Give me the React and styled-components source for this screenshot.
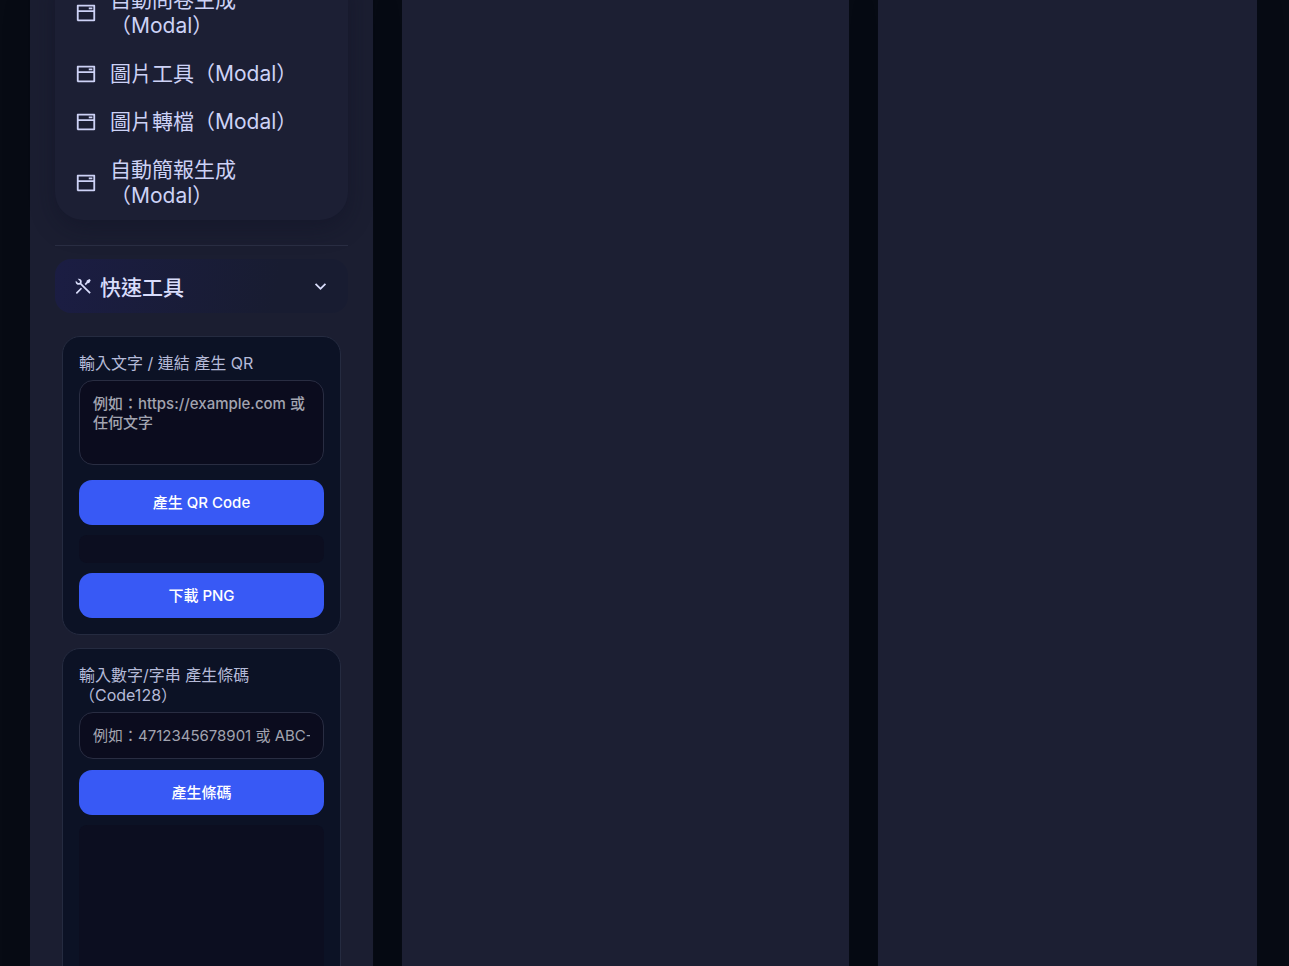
import React from "react";
import styled, { createGlobalStyle } from "styled-components";
import { RiWindow2Line, RiToolsLine, RiArrowDownSLine } from "react-icons/ri";

const modals = ["自動問卷生成（Modal）", "圖片工具（Modal）", "圖片轉檔（Modal）", "自動簡報生成（Modal）"];

export default function App() {
  return (
    <>
      <GlobalStyle />
      <Page>
        <Sidebar>
          <Menu>
            {modals.map((name) => (
              <li key={name}>
                <MenuLink href="#">
                  <RiWindow2Line />
                  <span>{name}</span>
                </MenuLink>
              </li>
            ))}
          </Menu>
          <Divider />
          <SectionToggle type="button" aria-expanded="true">
            <RiToolsLine size={21} />
            <span>快速工具</span>
            <RiArrowDownSLine size={21} />
          </SectionToggle>
          <Tools>
            <ToolCard>
              <Label htmlFor="qrText">輸入文字 / 連結 產生 QR</Label>
              <TextArea id="qrText" placeholder="例如：https://example.com 或任何文字" />
              <Button type="button">產生 QR Code</Button>
              <Preview />
              <Button type="button">下載 PNG</Button>
            </ToolCard>
            <ToolCard>
              <Label htmlFor="barcodeText">輸入數字/字串 產生條碼（Code128）</Label>
              <Input id="barcodeText" placeholder="例如：4712345678901 或 ABC-123" />
              <Button type="button">產生條碼</Button>
              <Preview $tall />
            </ToolCard>
          </Tools>
        </Sidebar>
        <Panel />
        <Panel />
      </Page>
    </>
  );
}

const GlobalStyle = createGlobalStyle`
  * {
    box-sizing: border-box;
  }
  body {
    margin: 0;
    background: #070b14;
    color: #cdd2f6;
    font-family: Inter, "Noto Sans CJK TC", sans-serif;
  }
  button, input, textarea {
    font-family: inherit;
  }
`;
const Page = styled.div`
  display: grid;
  grid-template-columns: 343px minmax(0, 1.18fr) minmax(0, 1fr);
  gap: 29px;
  height: 100vh;
  padding: 0 32px 0 30px;
  overflow: hidden;
`;
const Panel = styled.main`
  background: #1c1f33;
  box-shadow: 0 0 30px rgba(0, 0, 0, 0.1);
`;
const Sidebar = styled.aside`
  padding: 0 25px;
  background: #1b1e31;
  box-shadow: 0 0 30px rgba(0, 0, 0, 0.1);
`;
const Menu = styled.ul`
  margin: -24px 0 0;
  padding: 0;
  list-style: none;
  background: #1c1f34;
  border-radius: 0 0 28px 28px;
  box-shadow: 0 8px 24px rgba(12, 16, 34, 0.4);
`;
const MenuLink = styled.a`
  display: flex;
  align-items: center;
  gap: 13px;
  padding: 11px 20px;
  color: inherit;
  font-size: 21px;
  line-height: 26px;
  text-decoration: none;
  svg {
    flex: none;
    width: 22px;
    height: 22px;
  }
`;
const Divider = styled.hr`
  height: 1px;
  margin: 25px 0 13px;
  border: 0;
  background: #292d42;
`;
const SectionToggle = styled.button`
  display: flex;
  align-items: center;
  gap: 6px;
  width: 100%;
  height: 54px;
  padding: 0 17px 0 18px;
  border: 0;
  border-radius: 16px;
  background: linear-gradient(100deg, #1b1d43, #181c31 75%);
  color: #d9ddfb;
  font-size: 21px;
  font-weight: 500;
  span {
    flex: 1;
    text-align: left;
  }
`;
const Tools = styled.div`
  display: flex;
  flex-direction: column;
  gap: 13px;
  padding: 23px 7px 0;
`;
const ToolCard = styled.section`
  display: flex;
  flex-direction: column;
  padding: 16px;
  border: 1px solid #252b40;
  border-radius: 18px;
  background: #0c1225;
`;
const Label = styled.label`
  margin-bottom: 7px;
  color: #b5bad8;
  font-size: 16px;
  line-height: 20px;
`;
const TextArea = styled.textarea`
  height: 85px;
  margin-bottom: 15px;
  padding: 13px;
  border: 1px solid #292d42;
  border-radius: 14px;
  background: #0b0c1e;
  color: #fff;
  font-size: 15px;
  font-weight: 500;
  line-height: 19px;
  resize: none;
  &::placeholder {
    color: #a2a4b0;
  }
`;
const Input = styled.input`
  height: 47px;
  margin-bottom: 11px;
  padding: 0 13px;
  border: 1px solid #292d42;
  border-radius: 14px;
  background: #0b0c1e;
  color: #fff;
  font-size: 15px;
  &::placeholder {
    color: #a2a4b0;
  }
`;
const Button = styled.button`
  height: 45px;
  padding-bottom: 4px;
  border: 0;
  border-radius: 13px;
  background: #3859f5;
  color: #fff;
  font-size: 15px;
  font-weight: 500;
`;
const Preview = styled.div`
  min-height: ${({ $tall }) => ($tall ? "180px" : "28px")};
  margin: 10px 0;
  border-radius: 8px;
  background: #0c0e20;
`;
